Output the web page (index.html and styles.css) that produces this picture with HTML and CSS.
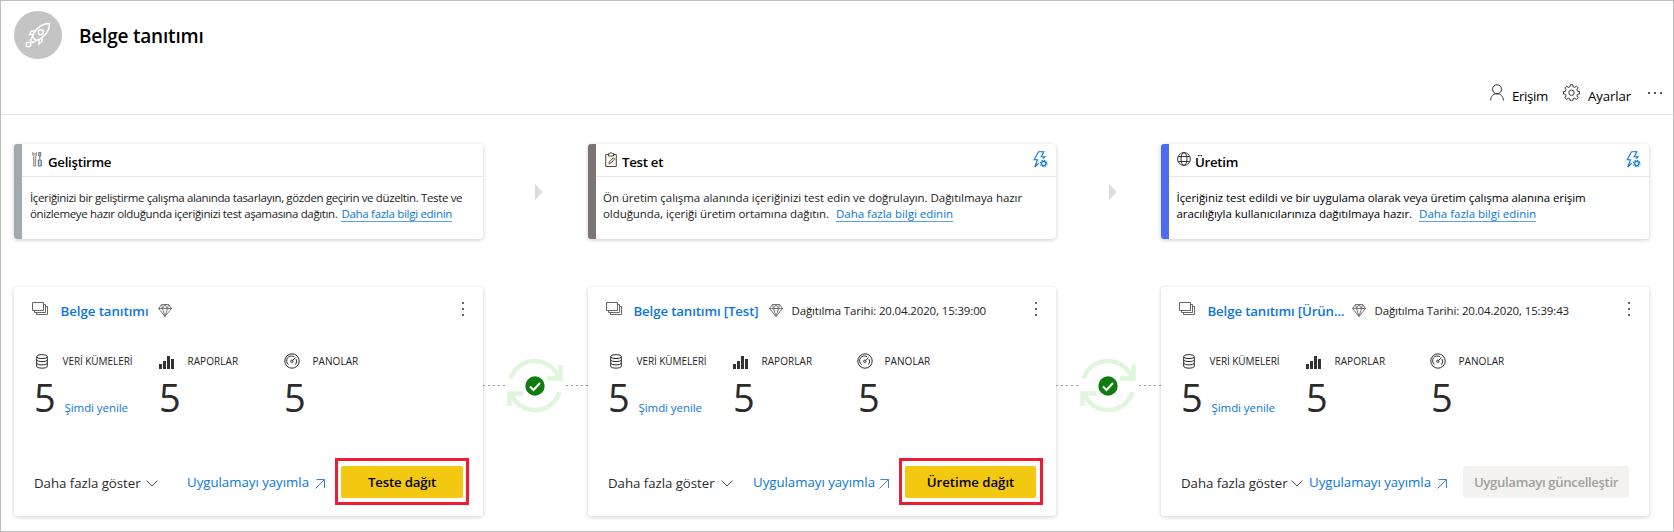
FILE: index.html
```html
<!DOCTYPE html>
<html lang="tr">
<head>
<meta charset="utf-8">
<title>Belge tanıtımı</title>
<link rel="stylesheet" href="styles.css">
</head>
<body>
<svg class="defs" width="0" height="0">
  <symbol id="stack" viewBox="0 0 16 13"><path d="M.5.5h11v8H.5zM11.5 2.5h2v8h-11v-2M13.500 4.500h2v8h-11v-2"/></symbol>
  <symbol id="gem" viewBox="0 0 14 13"><path d="M3.500.5h7l3 4-6.500 8-6.500-8zM.5 4.500h13M3.500.5l1 4 2.500 8 2.500-8 1-4M4.500 4.500l2.500-4 2.500 4"/></symbol>
  <symbol id="db" viewBox="0 0 12 15"><path d="M.7 2.700v9.500c0 2.600 10.600 2.600 10.600 0V2.700M.7 5.700c0 2.500 10.600 2.500 10.600 0M.7 9c0 2.500 10.600 2.500 10.600 0"/><ellipse cx="6" cy="2.600" rx="5.300" ry="2"/></symbol>
  <symbol id="bars" viewBox="0 0 15 13"><path class="solid" d="M0 8h3v5H0zM4 5h3v8H4zM8 0h3v13H8zM12 3h3v10h-3z"/></symbol>
  <symbol id="gauge" viewBox="0 0 16 16"><circle cx="8" cy="8" r="7.200"/><path d="M4.500 11.500a4.700 4.700 0 0 1 5.700-7.600M12 6a4.700 4.700 0 0 1-.5 5.500M8.500 7.500L11.500 4.500"/><circle cx="7.800" cy="8.300" r="1.200"/></symbol>
  <symbol id="chev" viewBox="0 0 12 7"><path d="M.5.5L6 6 11.500.5"/></symbol>
  <symbol id="out" viewBox="0 0 10 10"><path d="M.5 9.500l9-9M1.500.5h8v8.500"/></symbol>
  <symbol id="bolt" viewBox="0 0 15 17"><path d="M5.500.7h5.300L8.300 5.700h3.800L9.800 7.700M5.500.7L1.200 8.700h3.300l-2.700 7.300 4-3.800"/><circle cx="10.700" cy="12.500" r="2.100"/><circle class="teeth" cx="10.700" cy="12.500" r="3.200"/></symbol>
  <symbol id="sync" viewBox="0 0 56 56"><path class="arc" d="M3.500 20.500A25.500 25.500 0 0 1 51 18M53.500 7v13.500H40M52.500 34A25.500 25.500 0 0 1 5 37.500M2.500 48V35.500H16"/><circle class="dot" cx="28" cy="28" r="9.700"/><path class="tick" d="M23 28.500l3.500 3.500 6.500-7"/></symbol>
</svg>

<div class="page">
  <header class="topbar">
    <div class="brand">
      <span class="avatar">
        <svg width="26" height="26" viewBox="0 0 26 26"><path d="M24.500 1.500c-7 0-11.500 3-15.700 9.500l-1.300 4 3.500 3.500 4-1.500c6.500-4 9.500-8.500 9.500-15.500zM11 9H6.500L4.500 12.500h4M17 15v4.500L14 22v-4.500M7 15l-1.500 3.500 2.500 2 3-2"/><circle cx="15.800" cy="10.200" r="2.500"/><circle cx="3.500" cy="22.500" r="2.300"/></svg>
      </span>
      <h1 class="title">Belge tanıtımı</h1>
    </div>
    <nav class="tools">
      <svg class="tool-icon" width="16" height="17" viewBox="0 0 16 17"><circle cx="8" cy="5.300" r="4.500"/><path d="M1.500 16.500C2 12 4.500 9.800 8 9.800s6 2.200 6.500 6.700"/></svg>
      <span class="tool access">Erişim</span>
      <svg class="tool-icon gear" width="17" height="17" viewBox="0 0 17 17"><path d="M7.300.7h2.400l.4 2.100 1.500.6 1.800-1.200 1.700 1.700-1.200 1.800.6 1.500 2 .4v2.400l-2 .4-.6 1.500 1.200 1.800-1.700 1.700-1.800-1.200-1.500.6-.4 2.100H7.300l-.4-2.100-1.500-.6-1.800 1.200-1.700-1.700 1.200-1.800-.6-1.500-2-.4V7.600l2-.4.600-1.500-1.200-1.800 1.700-1.700 1.800 1.200 1.500-.6z"/><circle cx="8.500" cy="8.700" r="2.700"/></svg>
      <span class="tool settings">Ayarlar</span>
      <svg class="more" width="14" height="2" viewBox="0 0 14 2"><path d="M0 0h2v2H0zM6 0h2v2H6zM12 0h2v2h-2z"/></svg>
    </nav>
  </header>

  <section class="columns stages">
    <article class="stage dev">
      <div class="stage-head">
        <svg class="stage-icon" width="10" height="15" viewBox="0 0 10 15"><path class="wrench" d="M.7.5v2.500l1 1.500v9.500h2V4.500l1-1.500V.5L3.700 2H1.700z"/><path class="driver" d="M6.800.5h2v3.500h-2zM7.800 4v4M6.300 8h3v6h-3z"/></svg>
        <h2 class="stage-name">Geliştirme</h2>
      </div>
      <p class="desc"><span class="l1">İçeriğinizi bir geliştirme çalışma alanında tasarlayın, gözden geçirin ve düzeltin. Teste ve</span><br><span class="l2">önizlemeye hazır olduğunda içeriğinizi test aşamasına dağıtın.</span><a class="learn">Daha fazla bilgi edinin</a></p>
    </article>
    <span class="step"></span>
    <article class="stage test">
      <div class="stage-head">
        <svg class="stage-icon" width="12" height="15" viewBox="0 0 12 15"><path class="paper" d="M.7 2.500h10.600v12H.7z"/><path class="paper" d="M3.500 1.500h1.300L6 .5l1.200 1h1.300v2.500h-5zM4 11.500l.4-1.700 4-4 1.300 1.300-4 4z"/></svg>
        <h2 class="stage-name">Test et</h2>
        <svg class="bolt" width="15" height="17"><use href="#bolt"/></svg>
      </div>
      <p class="desc"><span class="l1">Ön üretim çalışma alanında içeriğinizi test edin ve doğrulayın. Dağıtılmaya hazır</span><br><span class="l2">olduğunda, içeriği üretim ortamına dağıtın.</span><a class="learn">Daha fazla bilgi edinin</a></p>
    </article>
    <span class="step"></span>
    <article class="stage prod">
      <div class="stage-head">
        <svg class="stage-icon" width="14" height="14" viewBox="0 0 14 14"><circle cx="7" cy="7" r="6.400"/><ellipse cx="7" cy="7" rx="3" ry="6.400"/><path d="M1.300 4.500h11.400M1.300 9.500h11.400"/></svg>
        <h2 class="stage-name">Üretim</h2>
        <svg class="bolt" width="15" height="17"><use href="#bolt"/></svg>
      </div>
      <p class="desc"><span class="l1">İçeriğiniz test edildi ve bir uygulama olarak veya üretim çalışma alanına erişim</span><br><span class="l2">aracılığıyla kullanıcılarınıza dağıtılmaya hazır.</span><a class="learn">Daha fazla bilgi edinin</a></p>
    </article>
  </section>

  <section class="columns cards">
    <article class="card dev">
      <div class="card-head">
        <svg class="stack" width="16" height="13"><use href="#stack"/></svg>
        <a class="name">Belge tanıtımı</a>
        <svg class="gem" width="14" height="13"><use href="#gem"/></svg>
        <span class="kebab"></span>
      </div>
      <div class="stats">
        <div class="stat"><svg class="db" width="12" height="15"><use href="#db"/></svg><span class="label sets">VERİ KÜMELERİ</span><b class="num">5</b><a class="refresh">Şimdi yenile</a></div>
        <div class="stat"><svg class="bars" width="15" height="13"><use href="#bars"/></svg><span class="label">RAPORLAR</span><b class="num">5</b></div>
        <div class="stat"><svg class="gauge" width="16" height="16"><use href="#gauge"/></svg><span class="label">PANOLAR</span><b class="num">5</b></div>
      </div>
      <div class="card-foot">
        <span class="show">Daha fazla göster</span><svg class="chev" width="12" height="7"><use href="#chev"/></svg>
        <a class="publish">Uygulamayı yayımla</a><svg class="out" width="10" height="10"><use href="#out"/></svg>
        <button class="btn deploy">Teste dağıt</button>
      </div>
    </article>
    <div class="link"><svg width="56" height="56"><use href="#sync"/></svg></div>
    <article class="card test">
      <div class="card-head">
        <svg class="stack" width="16" height="13"><use href="#stack"/></svg>
        <a class="name">Belge tanıtımı [Test]</a>
        <svg class="gem" width="14" height="13"><use href="#gem"/></svg>
        <span class="date">Dağıtılma Tarihi: 20.04.2020, 15:39:00</span>
        <span class="kebab"></span>
      </div>
      <div class="stats">
        <div class="stat"><svg class="db" width="12" height="15"><use href="#db"/></svg><span class="label sets">VERİ KÜMELERİ</span><b class="num">5</b><a class="refresh">Şimdi yenile</a></div>
        <div class="stat"><svg class="bars" width="15" height="13"><use href="#bars"/></svg><span class="label">RAPORLAR</span><b class="num">5</b></div>
        <div class="stat"><svg class="gauge" width="16" height="16"><use href="#gauge"/></svg><span class="label">PANOLAR</span><b class="num">5</b></div>
      </div>
      <div class="card-foot">
        <span class="show">Daha fazla göster</span><svg class="chev" width="12" height="7"><use href="#chev"/></svg>
        <a class="publish">Uygulamayı yayımla</a><svg class="out" width="10" height="10"><use href="#out"/></svg>
        <button class="btn deploy">Üretime dağıt</button>
      </div>
    </article>
    <div class="link"><svg width="56" height="56"><use href="#sync"/></svg></div>
    <article class="card prod">
      <div class="card-head">
        <svg class="stack" width="16" height="13"><use href="#stack"/></svg>
        <a class="name">Belge tanıtımı [Ürün...</a>
        <svg class="gem" width="14" height="13"><use href="#gem"/></svg>
        <span class="date">Dağıtılma Tarihi: 20.04.2020, 15:39:43</span>
        <span class="kebab"></span>
      </div>
      <div class="stats">
        <div class="stat"><svg class="db" width="12" height="15"><use href="#db"/></svg><span class="label sets">VERİ KÜMELERİ</span><b class="num">5</b><a class="refresh">Şimdi yenile</a></div>
        <div class="stat"><svg class="bars" width="15" height="13"><use href="#bars"/></svg><span class="label">RAPORLAR</span><b class="num">5</b></div>
        <div class="stat"><svg class="gauge" width="16" height="16"><use href="#gauge"/></svg><span class="label">PANOLAR</span><b class="num">5</b></div>
      </div>
      <div class="card-foot">
        <span class="show">Daha fazla göster</span><svg class="chev" width="12" height="7"><use href="#chev"/></svg>
        <a class="publish">Uygulamayı yayımla</a><svg class="out" width="10" height="10"><use href="#out"/></svg>
        <button class="btn" disabled>Uygulamayı güncelleştir</button>
      </div>
    </article>
  </section>
</div>
</body>
</html>
```
FILE: styles.css
```css
* { box-sizing: border-box; }
body { margin: 0; background: #fff; color: #000; font: 13.25px/20px "Open Sans", "Noto Sans", sans-serif; }
h1, h2, p { margin: 0; }
svg { flex: none; fill: none; stroke: #333; }
.defs { position: absolute; }
.solid { fill: #333; stroke: none; }

.page { width: 1674px; height: 532px; border: 1px solid #bdbdbd; overflow: hidden; white-space: nowrap; }

/* Top bar */
.topbar { height: 114px; padding-top: 10px; border-bottom: 1px solid #e6e6e6; }
.brand { display: flex; align-items: center; gap: 17px; padding-left: 13px; }
.avatar { display: flex; align-items: center; justify-content: center; width: 48px; height: 48px; border-radius: 50%; background: #c4c4c4; }
.avatar svg { stroke: #fff; stroke-width: 1.5; }
.title { padding-top: 2px; font-size: 19px; line-height: 28px; font-weight: 600; letter-spacing: -0.2px; }
.tools { display: flex; margin: 27px 0 0 1488px; height: 20px; }
.tool-icon { margin-top: -2px; }
.access { width: 36px; margin: 0 15px 0 7px; letter-spacing: -0.34px; }
.settings { width: 43px; margin: 0 17px 0 8px; letter-spacing: -0.13px; }
.more { margin-top: 6px; }
.more path { fill: #555; stroke: none; }

/* Three-column pipeline */
.columns { display: grid; grid-template-columns: 469px 105px 468px 105px 488px; padding-left: 13px; }
.stages { margin-top: 29px; }
.cards { margin-top: 48px; }
.stage, .card { background: #fff; border-radius: 3px; box-shadow: 0 1px 4px rgba(0, 0, 0, 0.2); }

.stage { height: 95px; border-left: 8px solid; }
.stage.dev { border-color: #9fabaf; }
.stage.test { border-color: #7a7574; }
.stage.prod { border-color: #4f6bed; }
.stage-head { display: flex; height: 33px; padding: 0 8px; border-bottom: 1px solid #e6e6e6; }
.stage-icon { margin-top: 8px; }
.stage-name { margin: 8px auto 0 6px; font-size: 13.25px; font-weight: 600; letter-spacing: -0.28px; }
.dev .stage-icon { margin-left: 2px; }
.test .stage-icon { margin-left: 1px; }
.test .stage-name { margin-left: 5px; }
.prod .stage-name { margin-left: 4px; }
.wrench { fill: #f5d9b5; stroke: #7d766e; stroke-width: .8; }
.driver { fill: #a5dcf7; stroke: #3d5a77; stroke-width: .8; }
.paper { fill: #fff6e6; stroke: #4a4a4a; }
.bolt { margin-top: 7px; stroke: #0a76d8; stroke-width: 1.1; }
.teeth { stroke-dasharray: 1.25 1.263; stroke-width: 1.2; }
.desc { padding: 13px 0 0 8px; font-size: 11.5px; line-height: 16px; color: #222; }
.dev .l1 { letter-spacing: -0.367px; }
.dev .l2 { letter-spacing: -0.36px; }
.dev .learn { margin-left: 4px; letter-spacing: -0.3px; }
.test .desc { padding-left: 7px; }
.test .l1 { letter-spacing: -0.05px; }
.test .l2 { letter-spacing: -0.065px; }
.prod .desc { color: #000; padding-left: 7.5px; }
.prod .l1 { letter-spacing: -0.07px; }
.prod .l2 { letter-spacing: -0.055px; }
.learn { display: inline-block; height: 16px; margin-left: 7px; letter-spacing: -0.02px; border-bottom: 1px solid #5aa2ea; line-height: 16px; vertical-align: top; }
a { color: #0a76d8; }
.step { justify-self: start; align-self: center; margin-left: 52px; border: 8px solid transparent; border-left-color: #dcdcdc; border-right-width: 0; }
.test + .step { margin-left: 53px; }

/* Cards */
.card { height: 229px; padding: 13px 0 0 18px; }
.card-head { display: flex; height: 20px; margin-bottom: 34px; line-height: 22px; }
.stack { margin-top: 2px; stroke: #666; }
.name { width: 88px; margin: 0 9px 0 12.5px; font-weight: 600; letter-spacing: -0.055px; }
.test .name { width: 125px; margin: 0 10px 0 11.5px; letter-spacing: -0.13px; }
.prod .name { width: 137px; margin-right: 7px; letter-spacing: -0.13px; }
.gem { margin-top: 4px; stroke: #666; stroke-width: .9; }
.date { margin-left: 9px; font-size: 11.5px; letter-spacing: -0.15px; color: #222; }
.kebab { width: 2px; height: 14px; margin: 2px 19px 0 auto; background: linear-gradient(#666 2px, transparent 2px 6px, #666 6px 8px, transparent 8px 12px, #666 12px); }
.stats { display: grid; grid-template-columns: repeat(3, 125px); padding-left: 2px; height: 63px; }
.stat { display: grid; grid-template: 14px 49px / 28.5px 1fr; }
.stat svg { stroke: #2b2b2b; }
.db { margin-left: 2px; }
.bars { margin-top: 2px; }
.gauge { margin-top: -1px; }
.test .gauge, .prod .gauge { margin-left: -1px; }
.label { font-size: 10px; line-height: 14px; letter-spacing: 0.06px; color: #222; }
.sets { letter-spacing: -0.06px; }
.test .gauge + .label { margin-left: -2px; }
.prod .gauge + .label { margin-left: -1px; }
.num { width: 28px; padding: 9px 0 0; font-size: 38px; line-height: 40px; font-weight: 400; color: #2b2b2b; }
.refresh { padding: 32px 0 0 2px; font-size: 11.5px; line-height: 16px; letter-spacing: -0.07px; }
.card-foot { display: flex; align-items: center; height: 32px; margin-top: 49px; padding: 0 20px 0 2px; }
.show { width: 106px; padding-top: 2px; letter-spacing: -0.035px; color: #2b2b2b; }
.chev { margin: 2px 0 0 6px; stroke: #555; }
.publish { width: 122px; margin: 0 6px 0 29px; letter-spacing: -0.02px; }
.out { margin-top: 4px; stroke: #3a82d8; }
.test .chev { margin-left: 7px; }
.test .publish { margin: 0 4px 0 20px; }
.prod .chev { margin-left: 4px; }
.prod .publish { margin-left: 6px; }
.btn { position: relative; width: 122px; height: 32px; margin-left: auto; padding: 0; border: 0; border-radius: 2px; background: #f2c811; color: #000; font: 600 13.25px/20px "Open Sans", "Noto Sans", sans-serif; letter-spacing: -0.19px; }
.test .btn { width: 131px; letter-spacing: -0.04px; }
.prod .btn { width: 166px; background: #f3f2f1; color: #a19f9d; letter-spacing: -0.39px; }
.deploy::after { content: ""; position: absolute; inset: -8px -6px -7px; border: 3px solid #ee1b35; }
.test .deploy::after { right: -7px; }

/* Comparison link between two stages */
.link { display: flex; justify-content: space-between; align-items: center; height: 56px; margin-top: 71px; }
.link svg { margin: 0 1px 0 -1px; }
.link::before, .link::after { content: ""; width: 22px; height: 1px; margin-top: -1px; background: repeating-linear-gradient(90deg, #999 0 2px, transparent 2px 5px); }
.arc { stroke: #dff6dd; stroke-width: 4.500; }
.dot { fill: #107c10; stroke: none; }
.tick { stroke: #fff; stroke-width: 2; }
```
